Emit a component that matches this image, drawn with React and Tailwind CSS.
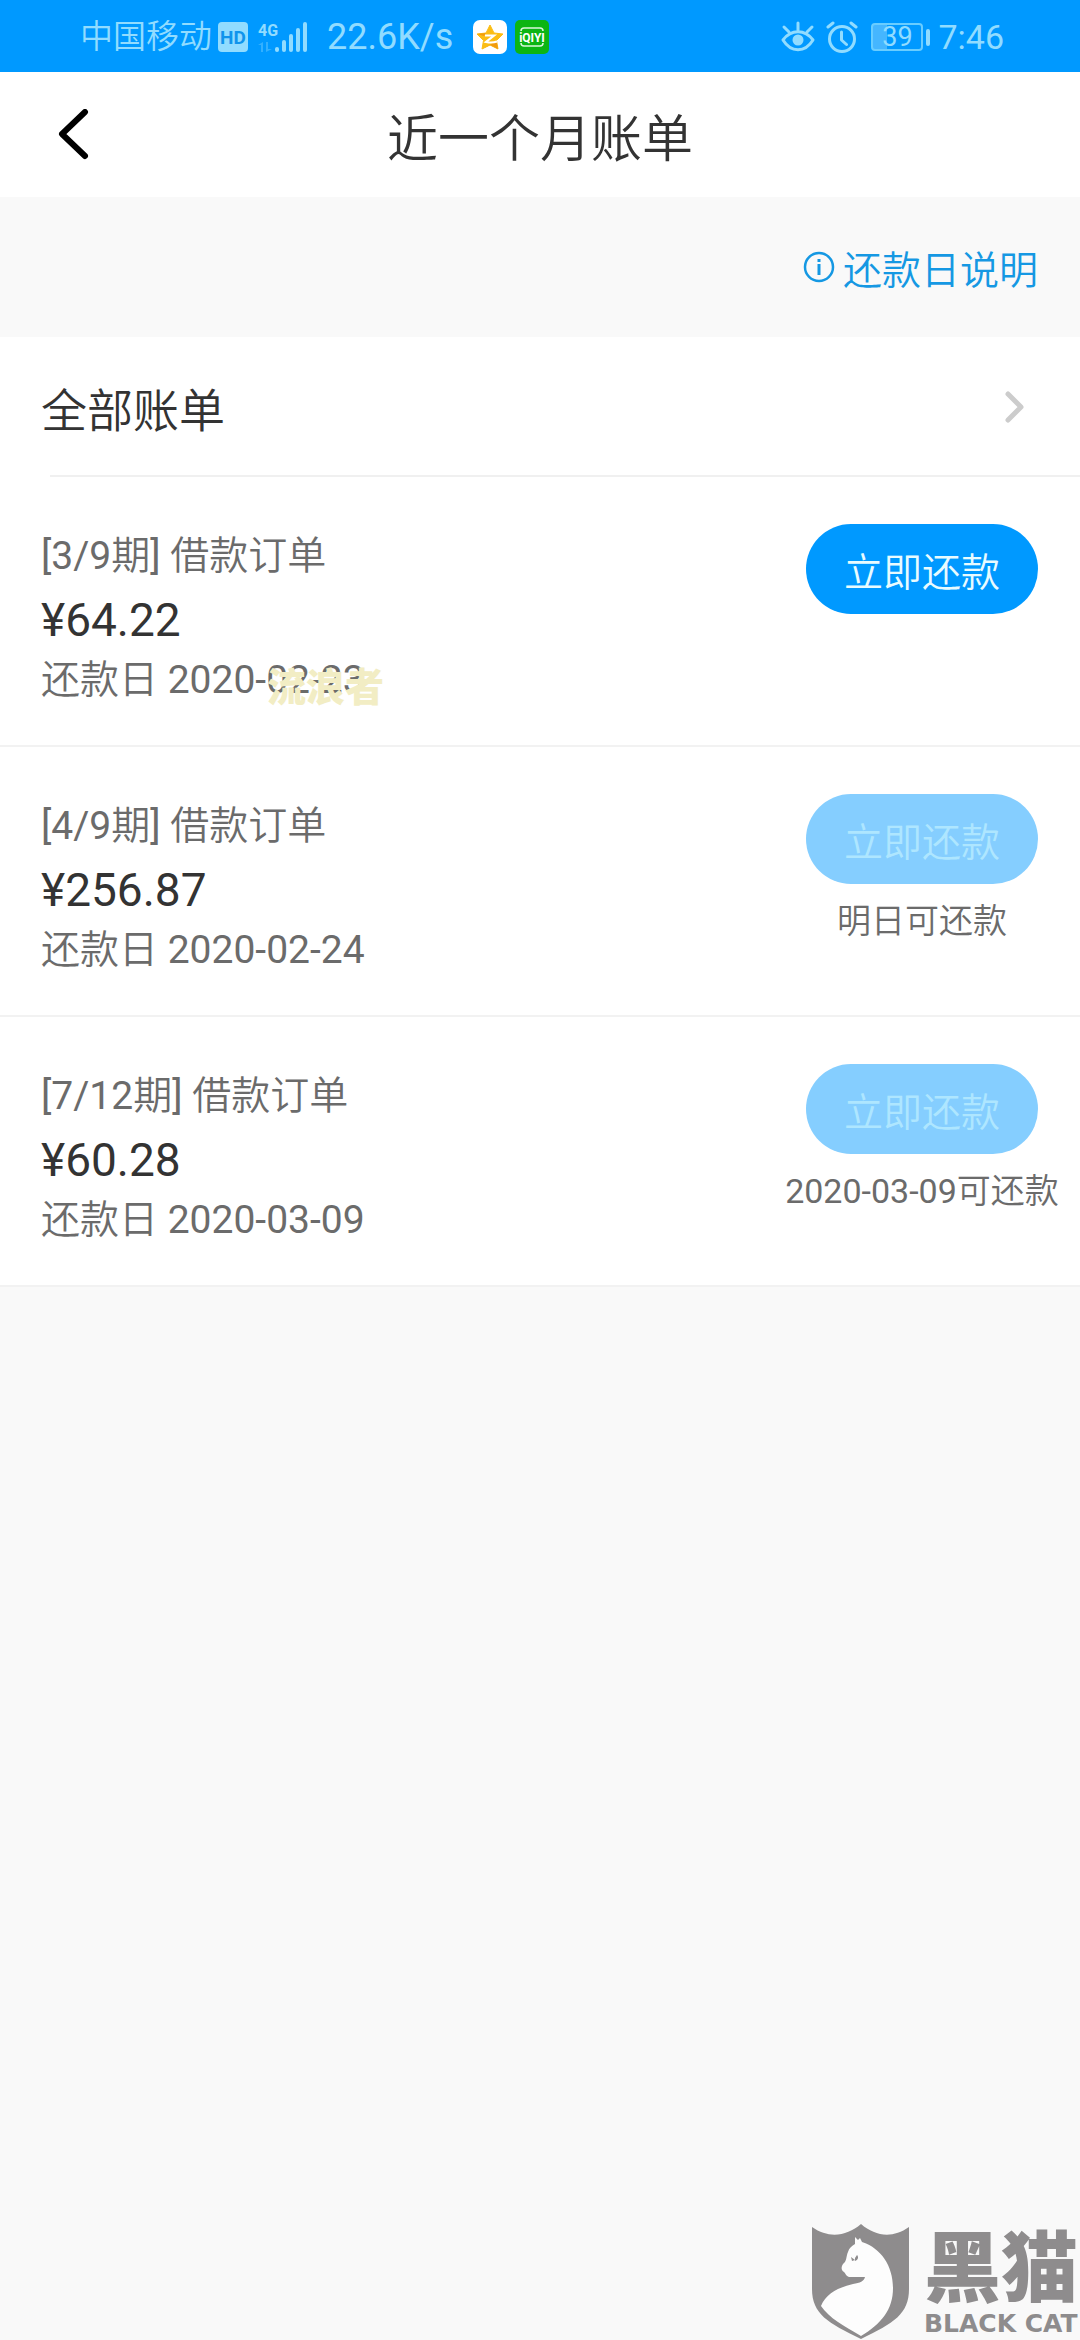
const bills = [
  {
    id: 1,
    term: "[3/9期]",
    amount: "¥64.22",
    dueDate: "2020-02-23",
    payable: true,
    note: "",
    sticker: "流浪者"
  },
  {
    id: 2,
    term: "[4/9期]",
    amount: "¥256.87",
    dueDate: "2020-02-24",
    payable: false,
    note: "明日可还款"
  },
  {
    id: 3,
    term: "[7/12期]",
    amount: "¥60.28",
    dueDate: "2020-03-09",
    payable: false,
    note: "2020-03-09可还款"
  }
];

function SignalIcon() {
  return (
    <svg className="h-8 w-[51px] overflow-visible" viewBox="0 0 51 32" fill="currentColor" aria-hidden="true">
      <text x="0" y="15" fontSize="16" fontWeight="700" fontFamily="Roboto">
        4G
      </text>
      <g opacity="0.35">
        <path d="M5 21v10H3v-7H0zM8 31V21h2v7h4z" />
      </g>
      <rect x="17" y="26" width="4" height="5" rx="2" />
      <rect x="24" y="19" width="4" height="12" rx="2" />
      <rect x="31" y="13" width="4" height="18" rx="2" />
      <rect x="38" y="7" width="4" height="24" rx="2" />
      <rect x="45" y="1" width="4" height="30" rx="2" />
    </svg>
  );
}

function StarAppIcon() {
  return (
    <svg className="h-[34px] w-[34px]" viewBox="0 0 34 34" aria-hidden="true">
      <rect width="34" height="34" rx="7" fill="#fff" />
      <path
        d="M17 5l4 8 9 1-6.500 6.500 1.500 8.500-8-4-8 4 1.500-8.500L4 14l9-1z"
        fill="#fbbd14"
        stroke="#fbbd14"
        strokeLinejoin="round"
      />
      <path d="M4 14l9-1-2 3zM9 29l8-4 8 4-1.500-8z" fill="#f29b0c" />
      <path d="M12 15.500h9l-8 6.500c4 .8 8 .6 11-.5" fill="none" stroke="#fff" strokeWidth="2.200" />
    </svg>
  );
}

function VideoAppIcon() {
  return (
    <svg className="h-[34px] w-[34px]" viewBox="0 0 34 34" aria-hidden="true">
      <rect width="34" height="34" rx="5" fill="#0cb513" />
      <path d="M6 11c0-2 1-3 3-3h16c2 0 3 1 3 3M6 23c0 2 1 3 3 3h16c2 0 3-1 3-3" fill="none" stroke="#d9f7da" strokeWidth="1.500" />
      <text x="17" y="21.500" fontSize="12" fontWeight="700" fontFamily="Roboto" fill="#fff" textAnchor="middle">
        iQIYI
      </text>
    </svg>
  );
}

function EyeIcon() {
  return (
    <svg className="h-8 w-[34px]" viewBox="0 0 34 32" fill="none" stroke="currentColor" strokeWidth="3" strokeLinecap="round" aria-hidden="true">
      <path d="M2 19c8-11 22-11 30 0-8 13-22 13-30 0z" strokeLinejoin="round" />
      <circle cx="17" cy="19" r="5.500" fill="currentColor" stroke="none" />
      <path d="M17 9V2M8 11L3 6M26 11l5-5" />
    </svg>
  );
}

function AlarmIcon() {
  return (
    <svg className="h-8 w-8" viewBox="0 0 32 32" fill="none" stroke="currentColor" strokeWidth="3" strokeLinecap="round" aria-hidden="true">
      <circle cx="16" cy="18" r="12.500" />
      <path d="M15.500 11v8l5 4.500M2 6l5-4M30 6l-5-4" strokeLinejoin="round" />
    </svg>
  );
}

function StatusBar() {
  return (
    <div className="flex h-[72px] items-center justify-between bg-[#0099ff] pt-[2px] pr-[76px] pl-20 text-[#91dcff]">
      <div className="flex items-center">
        <span className="text-[33px] leading-10">中国移动</span>
        <span className="ml-[6px] flex h-[30px] w-[30px] items-center justify-center rounded-[4px] bg-[#91dcff] text-[19px] leading-none font-bold text-[#0f94ec]">
          HD
        </span>
        <span className="ml-[10px]">
          <SignalIcon />
        </span>
        <span className="ml-[18px] text-[36px] leading-10">22.6K/s</span>
        <span className="ml-5 flex gap-2">
          <StarAppIcon />
          <VideoAppIcon />
        </span>
      </div>
      <div className="flex items-center">
        <EyeIcon />
        <span className="ml-[11px]">
          <AlarmIcon />
        </span>
        <span className="ml-[13px] flex h-7 w-[52px] items-center justify-center rounded-[4px] border-2 border-[#69cdff] bg-linear-to-r from-[#45b6ff] from-30% to-transparent to-30% text-[27px] leading-none">
          39
        </span>
        <span className="ml-[3px] h-[17px] w-1 rounded-full bg-[#91dcff]" />
        <span className="ml-2 text-[34px] leading-10">7:46</span>
      </div>
    </div>
  );
}

function BillRow({ bill }) {
  return (
    <li className="flex h-[270px] justify-between border-b-2 border-[#f2f2f2] pt-[47px] pl-[41px]">
      <div>
        <p className="text-[39px] leading-[64px] text-[#6b6b6b]">{bill.term} 借款订单</p>
        <p className="text-[46px] leading-[64px] text-[#333]">{bill.amount}</p>
        <p className="relative text-[39px] leading-[56px] text-[#6b6b6b]">
          还款日 {bill.dueDate}
          {bill.sticker && (
            <span className="absolute top-2 left-[226px] font-[Roboto,'Noto_Sans_CJK_SC',sans-serif] font-black whitespace-nowrap text-[#f2edc4]">
              {bill.sticker}
            </span>
          )}
        </p>
      </div>
      <div className="flex w-[316px] flex-col items-center">
        <button
          className="h-[90px] w-[232px] rounded-full bg-[#0099ff] font-['Noto_Sans_CJK_SC',sans-serif] text-[39px] font-[350] text-[#e8fbff] disabled:bg-[#85ceff] disabled:text-[#aee6ff]"
          disabled={!bill.payable}
          type="button"
        >
          立即还款
        </button>
        {bill.note && <p className="mt-[11px] text-[34px] leading-[52px] text-[#6b6b6b]">{bill.note}</p>}
      </div>
    </li>
  );
}

function BlackCatLogo() {
  return (
    <div className="flex items-end text-[#8e8c8d]">
      <svg className="h-[116px] w-[98px]" viewBox="0 0 98 116" aria-hidden="true">
        <path
          d="M0 3c17 12 35 9 49-3 14 12 31 15 48 3v62c0 25-15 34-48 50C16 99 0 90 0 65z"
          fill="currentColor"
        />
        <path
          d="M43 13l3 3 2-2 2 4c19 6 31 24 31 46 0 22-12 36-32 48C32 102 17 94 9 82c5-13 19-19 32-22 7-1 11-3 12-7l-16 0c-3-1-3-3-5-5-3-2-3-5-1-8 4-3 3-8 5-12 1-4 4-6 7-8z"
          fill="#fdfdfd"
        />
        <path d="M39 33l4 3-3 1zM43 34l2-3c2 2 1 5-2 6z" fill="currentColor" />
      </svg>
      <div className="ml-[14px] flex flex-col font-[Roboto,'Noto_Sans_CJK_SC',sans-serif]">
        <span className="text-[77px] leading-[76px] font-black">黑猫</span>
        <span className="font-['DejaVu_Sans',sans-serif] text-[25px] leading-8 font-bold whitespace-nowrap">BLACK CAT</span>
      </div>
    </div>
  );
}

export default function App() {
  return (
    <div className="flex min-h-screen flex-col bg-[#f9f9f9] font-[Roboto,'Noto_Sans_CJK_SC_DemiLight','Noto_Sans_CJK_SC',sans-serif]">
      <StatusBar />

      <header className="grid h-[125px] grid-cols-[1fr_auto_1fr] items-center bg-white">
        <button className="ml-[58px] w-8 text-black" aria-label="返回" type="button">
          <svg className="h-[52px] w-8" viewBox="0 0 32 52" fill="none" stroke="currentColor" strokeWidth="6" strokeLinecap="round" strokeLinejoin="round" aria-hidden="true">
            <path d="M27 3L4 25l23 22" />
          </svg>
        </button>
        <h1 className="font-['Noto_Sans_CJK_SC',sans-serif] text-[51px] leading-[72px] font-[350] text-[#333]">近一个月账单</h1>
      </header>

      <div className="flex h-[140px] items-center justify-end pr-[42px]">
        <a
          className="flex items-center gap-2 font-['Noto_Sans_CJK_SC',sans-serif] text-[39px] leading-[56px] font-[350] text-[#1598e3]"
          href="#rules"
        >
          <svg className="h-8 w-8" viewBox="0 0 32 32" fill="none" stroke="currentColor" strokeWidth="2.500" aria-hidden="true">
            <circle cx="16" cy="16" r="14" />
            <path d="M16 13v11M16 8v3" strokeWidth="3" />
          </svg>
          还款日说明
        </a>
      </div>

      <main className="bg-white">
        <a
          className="flex h-[140px] items-center justify-between pr-[55px] pl-[41px] font-['Noto_Sans_CJK_SC',sans-serif] text-[46px] font-[350] text-[#333]"
          href="#all"
        >
          全部账单
          <svg className="h-8 w-5" viewBox="0 0 20 32" fill="none" stroke="#ccc" strokeWidth="5" strokeLinecap="round" strokeLinejoin="round" aria-hidden="true">
            <path d="M3 3l13 13L3 29" />
          </svg>
        </a>
        <ul className="relative before:absolute before:-top-[2px] before:right-0 before:left-[50px] before:h-[2px] before:bg-[#f0f0f0]">
          {bills.map((bill) => (
            <BillRow bill={bill} key={bill.id} />
          ))}
        </ul>
      </main>

      <footer className="mt-auto flex justify-end pr-[2px]">
        <BlackCatLogo />
      </footer>
    </div>
  );
}
